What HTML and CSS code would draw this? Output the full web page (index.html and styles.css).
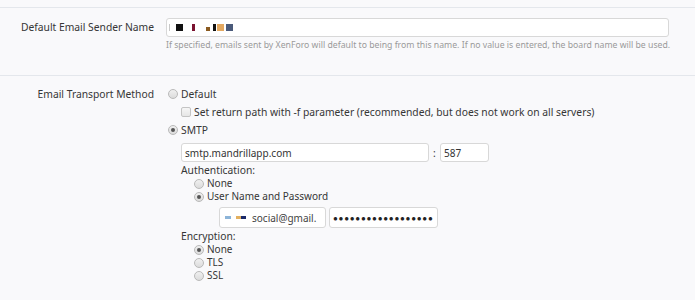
FILE: index.html
```html
<!DOCTYPE html>
<html lang="en">

<head>
    <meta charset="UTF-8">
    <title>Email Options</title>
    <link rel="stylesheet" href="styles.css">
</head>

<body>
    <div class="top-space"></div>

    <dl class="ctrl-unit first">
        <dt>Default Email Sender Name</dt>
        <dd>
            <div class="textbox wide">
                <span class="px" style="background:#c8c8c8;width:1px;margin-left:0"></span>
                <span class="px" style="background:#111;width:7px;margin-left:6px"></span>
                <span class="px" style="background:#7a1230;width:3px;margin-left:9px"></span>
                <span class="px low" style="background:#8a5a20;width:4px;margin-left:11px"></span>
                <span class="px" style="background:#111;width:3px;margin-left:3px"></span>
                <span class="px" style="background:#e3a860;width:7px;margin-left:1px"></span>
                <span class="px" style="background:#4a5a7a;width:7px;margin-left:2px"></span>
            </div>
            <p class="explain">If specified, emails sent by XenForo will default to being from this name. If no value is entered, the board name will be used.</p>
        </dd>
    </dl>

    <dl class="ctrl-unit">
        <dt>Email Transport Method</dt>
        <dd>
            <ul class="choices">
                <li>
                    <label class="opt"><span class="radio"></span>Default</label>
                    <div class="sub">
                        <label class="opt"><span class="check"></span>Set return path with -f parameter (recommended, but does not work on all servers)</label>
                    </div>
                </li>
                <li>
                    <label class="opt"><span class="radio on"></span>SMTP</label>
                    <div class="sub smtp">
                        <div class="host-row">
                            <div class="textbox host">smtp.mandrillapp.com</div>
                            <span class="colon">:</span>
                            <div class="textbox port">587</div>
                        </div>

                        <div class="group-title">Authentication:</div>
                        <ul class="inner">
                            <li><label class="opt"><span class="radio"></span>None</label></li>
                            <li><label class="opt"><span class="radio on"></span>User Name and Password</label></li>
                        </ul>
                        <div class="creds">
                            <div class="textbox user">
                                <span class="px thin" style="background:#8cb4d8;width:6px;margin-left:0"></span>
                                <span class="px thin" style="background:#e3b060;width:5px;margin-left:5px"></span>
                                <span class="px thin" style="background:#1a2a6a;width:5px;margin-left:0"></span>
                                <span class="mail">social@gmail.</span>
                            </div>
                            <div class="textbox pass">&#9679;&#9679;&#9679;&#9679;&#9679;&#9679;&#9679;&#9679;&#9679;&#9679;&#9679;&#9679;&#9679;&#9679;&#9679;&#9679;&#9679;&#9679;</div>
                        </div>

                        <div class="group-title">Encryption:</div>
                        <ul class="inner">
                            <li><label class="opt"><span class="radio on"></span>None</label></li>
                            <li><label class="opt"><span class="radio"></span>TLS</label></li>
                            <li><label class="opt"><span class="radio"></span>SSL</label></li>
                        </ul>
                    </div>
                </li>
            </ul>
        </dd>
    </dl>
</body>

</html>
```

FILE: styles.css
```css
body {
    font-family: 'Noto Sans', 'Liberation Sans', sans-serif;
    font-size: 10.3px;
    color: #363636;
    background: #f9f9fb;
    margin: 0;
    padding: 0;
}

.top-space {
    height: 7px;
}

.ctrl-unit {
    display: grid;
    grid-template-columns: 154px 1fr;
    column-gap: 12px;
    margin: 0;
    border-top: 1px solid #e4e7ec;
    padding: 9px 0 0;

    dt {
        text-align: right;
        line-height: 18px;
    }

    dd {
        margin: 0;
    }

    &.first {
        padding: 10px 0 24px;

        dt {
            line-height: 19px;
        }
    }
}

.textbox {
    box-sizing: border-box;
    height: 19px;
    background: #fff;
    border: 1px solid #d8d8d8;
    border-radius: 3px;
    padding: 0 3px;
    display: flex;
    align-items: center;
    font-size: 10px;
    color: #333;
    white-space: nowrap;
    overflow: hidden;

    &.wide {
        width: 503px;
        padding-left: 2px;
    }

    &.host {
        width: 248px;
    }

    &.port {
        width: 49px;
    }

    &.user,
    &.pass {
        height: 21px;
        width: 107px;
    }

    &.user {
        padding-left: 5px;
    }

    &.pass {
        width: 109px;
        font-size: 8px;
        letter-spacing: 0.75px;
        color: #222;
    }
}

.px {
    display: inline-block;
    width: 5px;
    height: 7px;
    flex-shrink: 0;

    &.low {
        height: 4px;
        margin-top: 3px;
    }

    &.thin {
        height: 3px;
    }
}

.mail {
    margin-left: 6px;
    color: #444;
}

.explain {
    margin: 2px 0 0;
    font-size: 8.7px;
    line-height: 12px;
    color: #9a9a9a;
    white-space: nowrap;
}

.choices,
.inner {
    list-style: none;
    margin: 0;
    padding: 0;
}

.opt {
    display: flex;
    align-items: center;
    line-height: 18px;
}

.inner .opt {
    line-height: 13px;
    font-size: 10px;
}

.radio,
.check {
    box-sizing: border-box;
    width: 10px;
    height: 10px;
    margin: 0 3px 0 2px;
    border: 1px solid #b9b9b9;
    border-radius: 50%;
    background: linear-gradient(#f0f0f0, #dcdcdc);
    display: inline-flex;
    align-items: center;
    justify-content: center;
    flex-shrink: 0;
}

.radio.on::after {
    content: "";
    width: 4px;
    height: 4px;
    border-radius: 50%;
    background: #555;
}

.check {
    border-radius: 2px;
    border-color: #c4c4c4;
    background: linear-gradient(#f6f6f6, #e6e6e6);
}

.sub {
    padding-left: 13px;
}

.smtp {
    padding-left: 15px;
    padding-bottom: 20px;
}

.host-row {
    display: flex;
    align-items: center;
    margin-top: 4px;

    .colon {
        width: 11px;
        text-align: center;
    }
}

.group-title {
    margin-top: 2px;
    line-height: 13px;
}

.inner {
    padding-left: 11px;
}

.creds {
    display: flex;
    gap: 3px;
    margin: 4px 0 1px 38px;
}
```
